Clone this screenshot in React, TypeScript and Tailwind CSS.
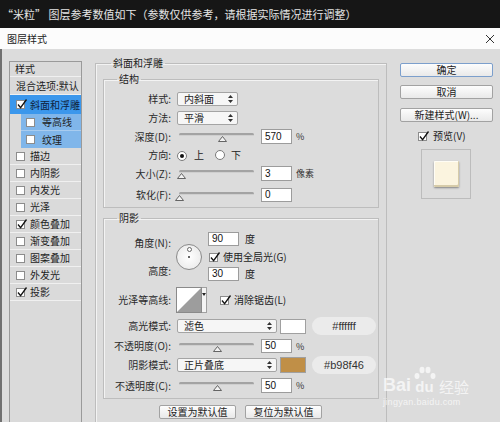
import type { ReactNode } from 'react'

function Check({ checked }: { checked?: boolean }) {
  return (
    <span className="relative inline-flex w-[9px] h-[9px] shrink-0 bg-white border border-[#8c8c8c]">
      {checked && (
        <svg className="absolute -top-[3px] -left-[1px]" width="12" height="12" viewBox="0 0 12 12">
          <path d="M2 6.5 L4.6 9.6 L10.5 1.5" stroke="#111" strokeWidth="1.3" fill="none" />
        </svg>
      )}
    </span>
  )
}

function Radio({ on }: { on?: boolean }) {
  return (
    <span className="inline-flex items-center justify-center w-[10px] h-[10px] rounded-full bg-white border border-[#7a7a7a] shrink-0">
      {on && <span className="w-[4px] h-[4px] rounded-full bg-[#111]" />}
    </span>
  )
}

function UpDown() {
  return (
    <svg width="5" height="8" viewBox="0 0 5 8">
      <path d="M2.5 0 L5 3 L0 3 Z M0 5 L5 5 L2.5 8 Z" fill="#333" />
    </svg>
  )
}

function Select({ w, value }: { w: string; value: string }) {
  return (
    <div className={`${w} h-[14px] flex items-center justify-between pl-[6px] pr-[4px] bg-[#f6f6f6] border border-[#a4a4a4] rounded-[2px] text-[10px] text-[#222]`}>
      <span>{value}</span>
      <UpDown />
    </div>
  )
}

function Input({ value, h = 'h-[15px]' }: { value: string; h?: string }) {
  return (
    <div className={`w-[31px] ${h} flex items-center pl-[3px] bg-white border border-[#9c9c9c] text-[10px] text-[#111] font-['Liberation_Sans',sans-serif]`}>
      {value}
    </div>
  )
}

function Slider({ pos }: { pos: number }) {
  return (
    <div className="relative w-[78px] h-full">
      <div className="absolute left-[2px] top-[4px] w-[75px] h-[3px] rounded-full bg-[#a3a3a3] border-b border-[#cfcfcf]" />
      <svg className="absolute top-[7px]" style={{ left: pos - 4 }} width="9" height="6" viewBox="0 0 9 6">
        <path d="M4.5 0.5 L8.5 5.5 L0.5 5.5 Z" fill="#f2f2f2" stroke="#555" strokeWidth="0.9" />
      </svg>
    </div>
  )
}

function Label({ children }: { children: ReactNode }) {
  return <span className="w-[67px] shrink-0 text-right text-[10px] text-[#2a2a2a] whitespace-nowrap">{children}</span>
}

function Btn({ children, def, w = 'w-[93px]' }: { children: ReactNode; def?: boolean; w?: string }) {
  return (
    <div
      className={`${w} h-[14px] flex items-center justify-center text-[10px] text-[#222] rounded-[2px] border bg-linear-to-b from-[#fdfdfd] to-[#e9e9e9] ${
        def ? 'border-[#7c9fcc]' : 'border-[#a2a2a2]'
      }`}
    >
      {children}
    </div>
  )
}

const sideItems: { label: string; checked?: boolean }[] = [
  { label: '描边' },
  { label: '内阴影' },
  { label: '内发光' },
  { label: '光泽' },
  { label: '颜色叠加', checked: true },
  { label: '渐变叠加' },
  { label: '图案叠加' },
  { label: '外发光' },
  { label: '投影', checked: true },
]

export default function App() {
  return (
    <div className="relative w-[500px] h-[422px] overflow-hidden flex flex-col bg-[#dcdcdc] font-['Noto_Sans_CJK_SC',sans-serif] leading-none">
      {/* caption bar */}
      <div className="h-[28px] shrink-0 flex items-center pl-[2px] bg-[#161616] text-[11px] text-[#e4e4e4] whitespace-nowrap">
        “米粒” 图层参考数值如下（参数仅供参考，请根据实际情况进行调整）
      </div>

      {/* dialog title */}
      <div className="h-[21px] shrink-0 flex items-center justify-between pl-[7px] pr-[5px] bg-[#fcfcfc]">
        <span className="text-[10px] text-[#222]">图层样式</span>
        <svg width="10" height="10" viewBox="0 0 10 10">
          <path d="M1 1 L9 9 M9 1 L1 9" stroke="#333" strokeWidth="1" />
        </svg>
      </div>

      {/* body */}
      <div className="flex-1 flex items-start border-l-2 border-[#707070]">
        {/* left list */}
        <div className="ml-[7px] mt-[12px] w-[73px] h-[400px] shrink-0 bg-[#dadada] border border-[#9a9a9a] text-[10px] text-[#1e1e1e]">
          <div className="h-[15px] flex items-center pl-[5px] border-b border-[#f0f0f0]">样式</div>
          <div className="h-[18px] flex items-center pl-[6px] border-b border-[#f0f0f0] whitespace-nowrap">混合选项:默认</div>
          <div className="h-[19px] flex items-center gap-[5px] pl-[6px] bg-[#3b97ec] text-[#10233d]">
            <Check checked />
            <span>斜面和浮雕</span>
          </div>
          <div className="h-[17px] ml-[11px] flex items-center gap-[7px] pl-[5px] bg-[#80b6ea] border-b border-[#a9ccef]">
            <Check />
            <span>等高线</span>
          </div>
          <div className="h-[17px] ml-[11px] flex items-center gap-[7px] pl-[5px] bg-[#80b6ea]">
            <Check />
            <span>纹理</span>
          </div>
          {sideItems.map((it) => (
            <div key={it.label} className="h-[17px] flex items-center gap-[5px] pl-[6px] border-b border-[#f0f0f0]">
              <Check checked={it.checked} />
              <span>{it.label}</span>
            </div>
          ))}
        </div>

        {/* middle: bevel & emboss */}
        <fieldset className="ml-[13px] mt-[7px] w-[292px] h-[380px] shrink-0 border border-[#bdbdbd] shadow-[inset_1px_1px_0_#f3f3f3]">
          <legend className="ml-[15px] px-[2px] text-[10px] leading-[14px] text-[#222]">斜面和浮雕</legend>

          {/* 结构 */}
          <fieldset className="ml-[7px] mt-[2px] w-[276px] border border-[#bdbdbd] shadow-[inset_1px_1px_0_#f3f3f3] pb-[5px]">
            <legend className="ml-[13px] px-[2px] text-[10px] leading-[14px] text-[#222]">结构</legend>
            <div className="mt-[6px] h-[14px] flex items-center">
              <Label>样式:</Label>
              <div className="ml-[6px]">
                <Select w="w-[61px]" value="内斜面" />
              </div>
            </div>
            <div className="mt-[5px] h-[14px] flex items-center">
              <Label>方法:</Label>
              <div className="ml-[6px]">
                <Select w="w-[61px]" value="平滑" />
              </div>
            </div>
            <div className="mt-[4px] h-[15px] flex items-center">
              <Label>深度(D):</Label>
              <div className="ml-[6px] h-full">
                <Slider pos={45} />
              </div>
              <div className="ml-[6px]">
                <Input value="570" />
              </div>
              <span className="ml-[4px] text-[9px] text-[#333]">%</span>
            </div>
            <div className="mt-[4px] h-[14px] flex items-center text-[10px] text-[#222]">
              <Label>方向:</Label>
              <span className="ml-[6px]"><Radio on /></span>
              <span className="ml-[7px]">上</span>
              <span className="ml-[11px]"><Radio /></span>
              <span className="ml-[6px]">下</span>
            </div>
            <div className="mt-[4px] h-[15px] flex items-center">
              <Label>大小(Z):</Label>
              <div className="ml-[6px] h-full">
                <Slider pos={4} />
              </div>
              <div className="ml-[6px]">
                <Input value="3" />
              </div>
              <span className="ml-[4px] text-[9px] text-[#333]">像素</span>
            </div>
            <div className="mt-[7px] h-[14px] flex items-center">
              <Label>软化(F):</Label>
              <div className="ml-[6px] h-full">
                <Slider pos={2} />
              </div>
              <div className="ml-[6px]">
                <Input value="0" h="h-[14px]" />
              </div>
            </div>
          </fieldset>

          {/* 阴影 */}
          <fieldset className="ml-[7px] mt-[3px] w-[276px] border border-[#bdbdbd] shadow-[inset_1px_1px_0_#f3f3f3] pb-[5px]">
            <legend className="ml-[13px] px-[2px] text-[10px] leading-[14px] text-[#222]">阴影</legend>

            <div className="mt-[7px] h-[50px] flex">
              <div className="flex flex-col">
                <div className="mt-[4px] h-[14px] flex items-center"><Label>角度(N):</Label></div>
                <div className="mt-[14px] h-[14px] flex items-center"><Label>高度:</Label></div>
              </div>
              <div className="ml-[5px] self-center w-[26px] h-[26px] rounded-full border border-[#8a8a8a] bg-radial from-[#ffffff] to-[#e6e6e6] flex flex-col items-center">
                <span className="mt-[2px] w-[5px] h-[5px] rounded-full border border-[#666] bg-white" />
                <span className="mt-[4px] w-[2px] h-[2px] rounded-full bg-[#333]" />
              </div>
              <div className="ml-[6px] flex flex-col">
                <div className="h-[14px] flex items-center">
                  <Input value="90" h="h-[14px]" />
                  <span className="ml-[6px] text-[10px] text-[#222]">度</span>
                </div>
                <div className="mt-[3px] h-[16px] flex items-center gap-[5px] pl-[1px] text-[10px] text-[#222] whitespace-nowrap">
                  <Check checked />
                  <span>使用全局光(G)</span>
                </div>
                <div className="mt-[2px] h-[14px] flex items-center">
                  <Input value="30" h="h-[14px]" />
                  <span className="ml-[6px] text-[10px] text-[#222]">度</span>
                </div>
              </div>
            </div>

            <div className="mt-[5px] h-[26px] flex items-center">
              <Label>光泽等高线:</Label>
              <div className="ml-[5px] flex">
                <svg width="26" height="26" viewBox="0 0 26 26" className="border border-[#8a8a8a] bg-white">
                  <path d="M0 26 L26 0 L26 26 Z" fill="#9d9d9d" />
                </svg>
                <div className="w-[5px] h-[26px] flex justify-center pt-[5px] bg-[#f4f4f4] border-y border-r border-[#a0a0a0]">
                  <svg width="4" height="3" viewBox="0 0 4 3">
                    <path d="M0 0 L4 0 L2 3 Z" fill="#222" />
                  </svg>
                </div>
              </div>
              <div className="ml-[13px] flex items-center gap-[5px] text-[10px] text-[#222] whitespace-nowrap">
                <Check checked />
                <span>消除锯齿(L)</span>
              </div>
            </div>

            <div className="mt-[4px] h-[18px] flex items-center">
              <Label>高光模式:</Label>
              <div className="ml-[6px]">
                <Select w="w-[100px]" value="滤色" />
              </div>
              <div className="ml-[3px] w-[26px] h-[15px] bg-white border border-[#a0a0a0]" />
              <div className="ml-[6px] w-[64px] h-[18px] rounded-full bg-[#ebebeb] flex items-center justify-center text-[11px] text-[#333] font-['Liberation_Sans',sans-serif]">
                #ffffff
              </div>
            </div>
            <div className="mt-[4px] h-[14px] flex items-center">
              <Label>不透明度(O):</Label>
              <div className="ml-[6px] h-full">
                <Slider pos={40} />
              </div>
              <div className="ml-[6px]">
                <Input value="50" h="h-[14px]" />
              </div>
              <span className="ml-[4px] text-[9px] text-[#333]">%</span>
            </div>
            <div className="mt-[3px] h-[18px] flex items-center">
              <Label>阴影模式:</Label>
              <div className="ml-[6px]">
                <Select w="w-[100px]" value="正片叠底" />
              </div>
              <div className="ml-[3px] w-[26px] h-[16px] bg-[#c08f47] border border-[#a0a0a0]" />
              <div className="ml-[6px] w-[64px] h-[18px] rounded-full bg-[#ebebeb] flex items-center justify-center text-[11px] text-[#333] font-['Liberation_Sans',sans-serif]">
                #b98f46
              </div>
            </div>
            <div className="mt-[4px] h-[15px] flex items-center">
              <Label>不透明度(C):</Label>
              <div className="ml-[6px] h-full">
                <Slider pos={40} />
              </div>
              <div className="ml-[6px]">
                <Input value="50" />
              </div>
              <span className="ml-[4px] text-[9px] text-[#333]">%</span>
            </div>
          </fieldset>

          <div className="mt-[6px] ml-[63px] flex gap-[9px]">
            <Btn w="w-[77px]">设置为默认值</Btn>
            <Btn w="w-[77px]">复位为默认值</Btn>
          </div>
        </fieldset>

        {/* right column */}
        <div className="ml-[13px] mt-[14px] w-[93px] shrink-0 flex flex-col">
          <Btn def>确定</Btn>
          <div className="mt-[8px]"><Btn>取消</Btn></div>
          <div className="mt-[9px]"><Btn>新建样式(W)...</Btn></div>
          <div className="mt-[7px] h-[14px] ml-[18px] flex items-center gap-[6px] text-[10px] text-[#222]">
            <Check checked />
            <span>预览(V)</span>
          </div>
          <div className="mt-[6px] ml-[21px] w-[50px] h-[50px] border border-[#bcbcbc] flex items-center justify-center">
            <div className="w-[25px] h-[26px] bg-[#fbf4df] rounded-[1px] shadow-[inset_-1px_-2px_0_#d6cba9,inset_1px_1px_0_#fffdf5,0_1px_2px_rgba(0,0,0,0.4)]" />
          </div>
        </div>
      </div>

      {/* watermark */}
      <div className="absolute left-[383px] top-[366px] flex flex-col text-white opacity-70 pointer-events-none">
        <div className="flex items-end">
          <span className="text-[18px] font-bold font-['Liberation_Sans',sans-serif] leading-none">Bai</span>
          <div className="relative w-[27px] h-[28px] flex items-end justify-center">
            <svg className="absolute top-0 left-[2px]" width="24" height="14" viewBox="0 0 24 14">
              <ellipse cx="4" cy="10" rx="2.5" ry="3" fill="white" />
              <ellipse cx="9" cy="4" rx="2.5" ry="3.2" fill="white" />
              <ellipse cx="15" cy="4" rx="2.5" ry="3.2" fill="white" />
              <ellipse cx="20" cy="10" rx="2.5" ry="3" fill="white" />
            </svg>
            <span className="text-[15px] font-bold font-['Liberation_Sans',sans-serif] leading-none">du</span>
          </div>
          <span className="ml-[1px] text-[15px] leading-none">经验</span>
        </div>
        <span className="mt-[4px] text-[9px] font-['Liberation_Sans',sans-serif] leading-none tracking-[0.3px]">jingyan.baidu.com</span>
      </div>
    </div>
  )
}
